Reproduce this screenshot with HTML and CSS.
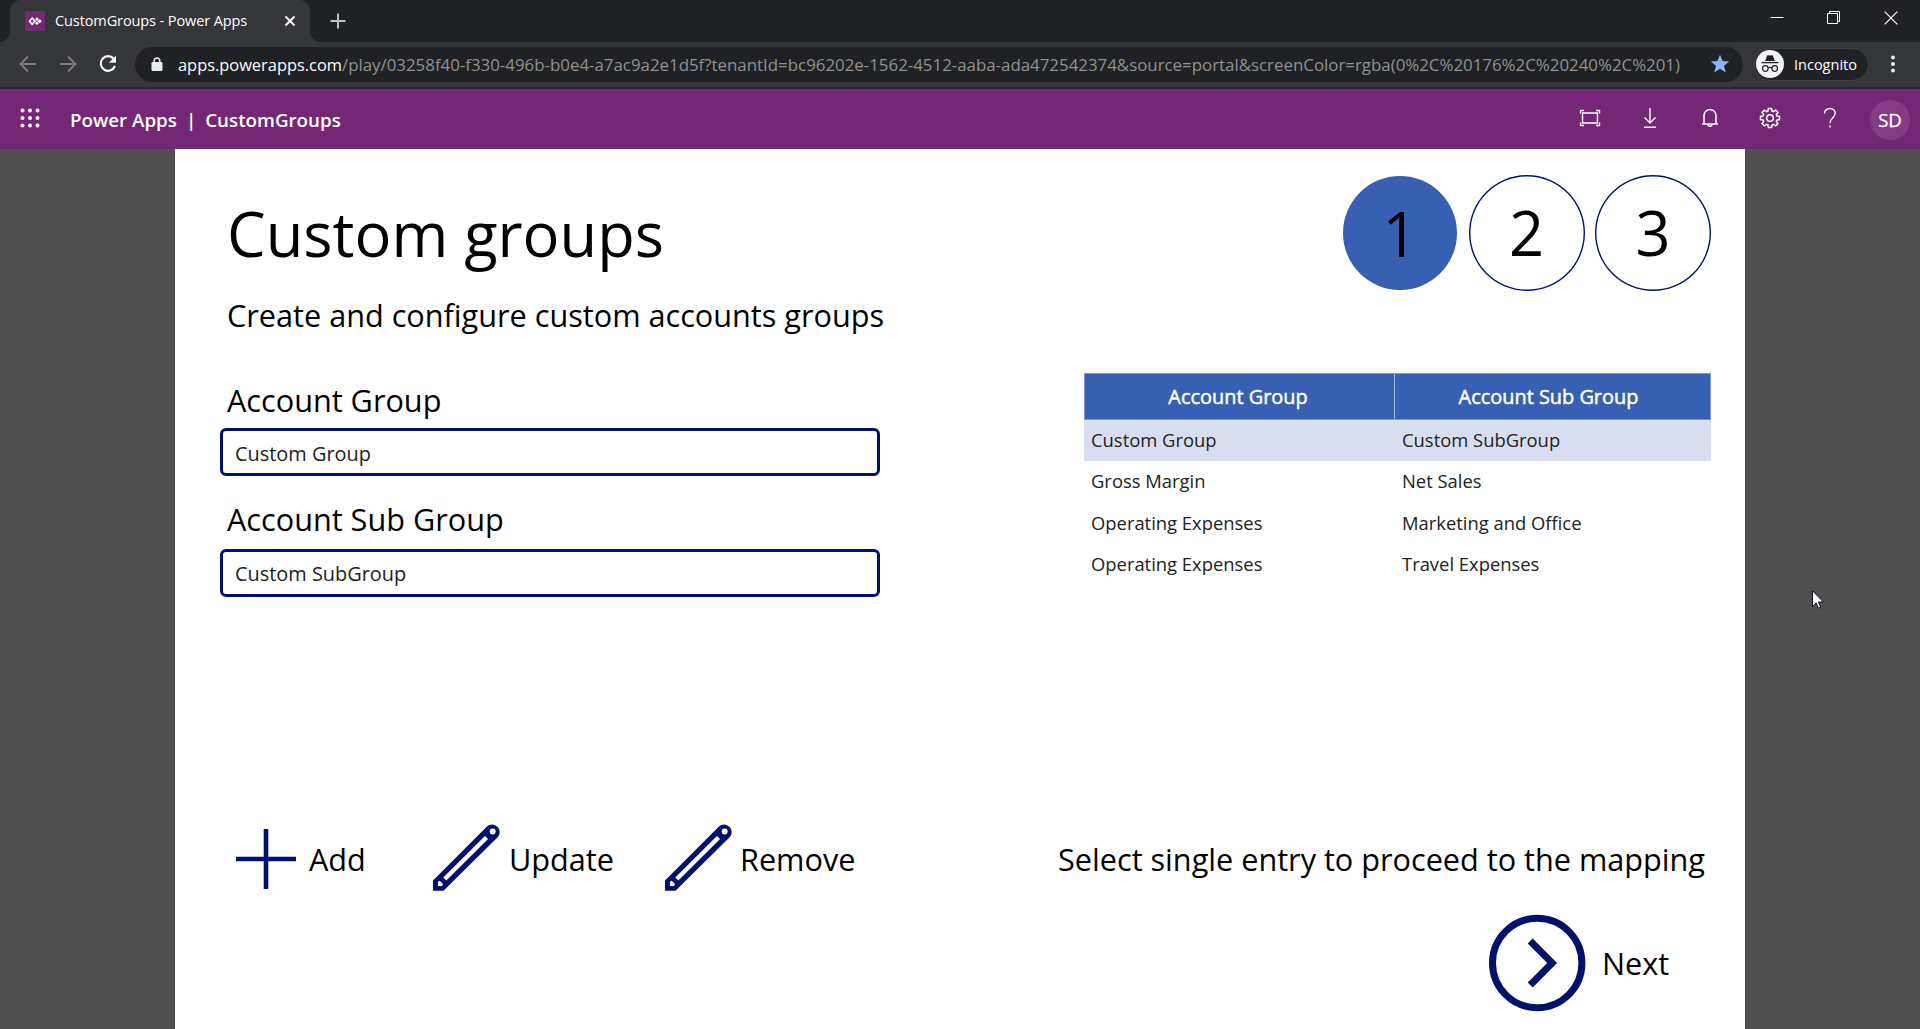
FILE: index.html
```html
<!DOCTYPE html>
<html lang="en">
<head>
<meta charset="utf-8">
<title>CustomGroups - Power Apps</title>
<link rel="stylesheet" href="styles.css">
</head>
<body>
<div class="tabstrip">
  <div class="tab">
    <svg class="favicon" width="20" height="20" viewBox="0 0 20 20"><rect width="20" height="20" fill="#742774"/><path d="M7.200 7.200 10 10.200l-2.800 3-2.800-3z" fill="none" stroke="#fff" stroke-width="1.700"/><path d="M12 6.300 13.900 8.200 12 10.100 10.100 8.200zM12 10.300l1.900 1.900-1.900 1.900-1.900-1.900zM14.800 8.100l2.100 2.100-2.100 2.100-2.100-2.100z" fill="#fff"/></svg>
    <span class="tab-title">CustomGroups - Power Apps</span>
    <svg class="tab-close" width="12" height="12" viewBox="0 0 12 12"><path d="M1.500 1.500l9 9M10.500 1.500l-9 9" stroke="#fff" stroke-width="2"/></svg>
  </div>
  <svg class="new-tab" width="16" height="16" viewBox="0 0 16 16"><path d="M8 .5v15M.5 8h15" stroke="#bdc1c6" stroke-width="2"/></svg>
  <div class="window-controls">
    <svg width="14" height="14" viewBox="0 0 14 14"><path d="M.5 6.500h13" stroke="#fff"/></svg>
    <svg width="14" height="14" viewBox="0 0 14 14"><path d="M.5 2.500h10v10h-10zM2.500 2.500v-2h10v10h-2" fill="none" stroke="#fff"/></svg>
    <svg width="14" height="14" viewBox="0 0 14 14"><path d="M.7.7l12.600 12.600M13.300.7.7 13.300" stroke="#fff" stroke-width="1.200"/></svg>
  </div>
</div>
<div class="toolbar">
  <div class="nav">
    <svg width="20" height="20" viewBox="0 0 20 20"><path d="M18 10H3M10 2.500 2.500 10l7.500 7.500" fill="none" stroke="#7c7d80" stroke-width="1.900"/></svg>
    <svg width="20" height="20" viewBox="0 0 20 20"><path d="M2 10h15M10 2.500l7.500 7.500-7.500 7.500" fill="none" stroke="#7c7d80" stroke-width="1.900"/></svg>
    <svg width="20" height="20" viewBox="0 0 20 20"><path d="M15.700 4.800A7.300 7.300 0 1 0 16.900 12" fill="none" stroke="#f1f3f4" stroke-width="2.200"/><path d="M18 1.600v7.200h-7.200z" fill="#f1f3f4"/></svg>
  </div>
  <div class="omnibox">
    <svg width="12" height="14" viewBox="0 0 12 14"><path d="M3.200 6V3.700a2.800 2.800 0 0 1 5.600 0V6" fill="none" stroke="#e8eaed" stroke-width="1.500"/><rect x=".5" y="5" width="11" height="9" rx="1.300" fill="#e8eaed"/></svg>
    <span class="url"><span class="url-host">apps.powerapps.com</span><span class="url-path">/play/03258f40-f330-496b-b0e4-a7ac9a2e1d5f?tenantId=bc96202e-1562-4512-aaba-ada472542374&amp;source=portal&amp;screenColor=rgba(0%2C%20176%2C%20240%2C%201)</span></span>
    <svg class="star" width="20" height="20" viewBox="0 0 20 20"><path d="M10 .8l2.500 6.300 6.700.4-5.200 4.300 1.700 6.600L10 14.800l-5.700 3.600L6 11.800.8 7.500l6.700-.4z" fill="#8ab4f8"/></svg>
  </div>
  <div class="incognito">
    <svg width="28" height="28" viewBox="0 0 28 28"><circle cx="14" cy="14" r="14" fill="#f1f3f4"/><path d="M9.200 11 11 5.800c.2-.6.700-.8 1.300-.6l1.700.4 1.700-.4c.6-.2 1.100 0 1.300.6l1.800 5.200z" fill="#202124"/><path d="M5.500 12.600h17" stroke="#202124" stroke-width="1.300"/><g fill="none" stroke="#202124" stroke-width="1.200"><circle cx="9.300" cy="18.500" r="2.800"/><circle cx="18.700" cy="18.500" r="2.800"/><path d="M12.100 18c1.200-.8 2.600-.8 3.800 0"/></g></svg>
    <span>Incognito</span>
  </div>
  <svg class="menu" width="6" height="18" viewBox="0 0 6 18" fill="#e8eaed"><circle cx="3" cy="2.500" r="2"/><circle cx="3" cy="9" r="2"/><circle cx="3" cy="15.500" r="2"/></svg>
</div>
<header class="suite">
  <svg class="waffle" width="20" height="20" viewBox="0 0 20 20" fill="#fff"><circle cx="2.500" cy="2.500" r="2"/><circle cx="10" cy="2.500" r="2"/><circle cx="17.500" cy="2.500" r="2"/><circle cx="2.500" cy="10" r="2"/><circle cx="10" cy="10" r="2"/><circle cx="17.500" cy="10" r="2"/><circle cx="2.500" cy="17.500" r="2"/><circle cx="10" cy="17.500" r="2"/><circle cx="17.500" cy="17.500" r="2"/></svg>
  <div class="brand"><span>Power Apps</span><span class="bar">|</span><span>CustomGroups</span></div>
  <div class="suite-icons">
    <svg width="22" height="22" viewBox="0 0 22 22" fill="none" stroke="#fff" stroke-width="1.400"><path d="M3.500 6h15v10h-15z"/><path d="M1.500 6.500v-3H5M17 3.500h3.500v3M20.500 15.500v3H17M5 18.500H1.500v-3"/></svg>
    <svg width="22" height="22" viewBox="0 0 22 22" fill="none" stroke="#fff" stroke-width="1.400"><path d="M11 1v15M5.500 10.500 11 16l5.500-5.500M5 20.300h12"/></svg>
    <svg width="22" height="22" viewBox="0 0 22 22" fill="none" stroke="#fff" stroke-width="1.500"><path d="M3 17h16M5 17V8.500a6 6 0 0 1 12 0V17M9 17.200a2 2 0 0 0 4 0"/></svg>
    <svg width="22" height="22" viewBox="0 0 22 22" fill="none" stroke="#fff" stroke-width="1.500"><circle cx="11" cy="11" r="3.300"/><path d="M9.400 1.500h3.200l.5 2.700 1.200.5 2.300-1.600 2.300 2.300-1.600 2.300.5 1.200 2.700.5v3.200l-2.700.5-.5 1.200 1.600 2.300-2.300 2.300-2.300-1.600-1.200.5-.5 2.700H9.400l-.5-2.700-1.200-.5-2.300 1.600-2.300-2.300 1.600-2.300-.5-1.200-2.700-.5V9.400l2.700-.5.500-1.200-1.600-2.300 2.300-2.300 2.300 1.600 1.200-.5z"/></svg>
    <svg width="22" height="22" viewBox="0 0 22 22" fill="none" stroke="#fff" stroke-width="1.400"><path d="M5.500 6.500c0-3 2.300-5 5.400-5s5.300 2 5.300 4.700c0 4.300-5.200 4.800-5.200 10M11 18.500v2"/></svg>
  </div>
  <div class="avatar">SD</div>
</header>
<main class="app">
  <div class="content">
    <section class="form">
      <h1>Custom groups</h1>
      <p class="subtitle">Create and configure custom accounts groups</p>
      <div class="label">Account Group</div>
      <div class="input first">Custom Group</div>
      <div class="label second">Account Sub Group</div>
      <div class="input">Custom SubGroup</div>
    </section>
    <section class="side">
      <div class="steps"><div class="step current">1</div><div class="step">2</div><div class="step">3</div></div>
      <div class="table">
        <div class="row head"><span>Account Group</span><span>Account Sub Group</span></div>
        <div class="row selected"><span>Custom Group</span><span>Custom SubGroup</span></div>
        <div class="row"><span>Gross Margin</span><span>Net Sales</span></div>
        <div class="row"><span>Operating Expenses</span><span>Marketing and Office</span></div>
        <div class="row"><span>Operating Expenses</span><span>Travel Expenses</span></div>
      </div>
    </section>
  </div>
  <div class="actions">
    <div class="action add"><svg width="60" height="60" viewBox="0 0 60 60"><path d="M30 0v60M0 30h60" stroke="#00126b" stroke-width="4.600"/></svg>Add</div>
    <div class="action update"><svg width="68" height="68" viewBox="0 0 68 68"><path d="M0 66.700V56.500L54.200 2.300a7.600 7.600 0 0 1 10.700 10.700L10.500 66.700z" fill="#00126b"/><path d="M11.800 55 53.500 13.500" stroke="#fff" stroke-width="4.400"/><circle cx="59.700" cy="7.500" r="3" fill="#fff"/><path d="M5 62v-4.200l1.800-1L10 60l-.8 2z" fill="#fff"/></svg>Update</div>
    <div class="action remove"><svg width="68" height="68" viewBox="0 0 68 68"><path d="M0 66.700V56.500L54.200 2.300a7.600 7.600 0 0 1 10.700 10.700L10.500 66.700z" fill="#00126b"/><path d="M11.800 55 53.500 13.500" stroke="#fff" stroke-width="4.400"/><circle cx="59.700" cy="7.500" r="3" fill="#fff"/><path d="M5 62v-4.200l1.800-1L10 60l-.8 2z" fill="#fff"/></svg>Remove</div>
    <div class="hint">Select single entry to proceed to the mapping</div>
  </div>
  <div class="next"><svg width="98" height="98" viewBox="0 0 98 98" fill="none" stroke="#00126b" stroke-width="7"><circle cx="49.200" cy="49" r="44.700"/><path d="M42.200 27 64.200 49 42.200 71"/></svg>Next</div>
</main>
<svg class="cursor" width="12" height="19" viewBox="0 0 12 19"><path d="M.5.7v15.600l3.600-3.400 2.300 5.300 2.300-1-2.300-5.200h5z" fill="#fff" stroke="#101020"/></svg>
</body>
</html>
```
FILE: styles.css
```css
* { box-sizing: border-box; }
body {
  margin: 0;
  width: 1920px;
  height: 1029px;
  overflow: hidden;
  background: #505050;
  font-family: "Open Sans", "Noto Sans", sans-serif;
  color: #000;
}
svg { display: block; flex: none; }

/* Browser chrome */
.tabstrip { display: flex; align-items: flex-start; height: 42px; background: #202124; padding-left: 10px; }
.tab {
  display: flex; align-items: center; width: 300px; height: 42px; padding: 0 14px 0 15px;
  background: #35363a; border-radius: 10px 10px 0 0; color: #fff; position: relative;
}
.tab::before, .tab::after { content: ""; position: absolute; bottom: 0; width: 10px; height: 10px; }
.tab::before { left: -10px; background: radial-gradient(circle at 0 0, #202124 9.500px, #35363a 10px); }
.tab::after { right: -10px; background: radial-gradient(circle at 100% 0, #202124 9.500px, #35363a 10px); }
.tab-title { margin-left: 10px; padding-bottom: 1px; font-size: 14.500px; letter-spacing: -.1px; white-space: nowrap; }
.tab-close { margin-left: auto; }
.new-tab { margin: 13px 0 0 20px; }
.window-controls { display: flex; gap: 43px; margin: 11px 22px 0 auto; }
.toolbar { display: flex; align-items: center; height: 47px; padding-bottom: 1px; background: #35363a; border-bottom: 2px solid #28292c; }
.nav { display: flex; gap: 20px; margin-left: 18px; }
.omnibox { display: flex; align-items: center; width: 1608px; height: 35px; margin-left: 17px; padding: 0 13px 0 16px; border-radius: 18px; background: #202124; }
.url { margin-left: 15px; font-size: 16.880px; white-space: nowrap; color: #909193; }
.url-host { color: #fff; font-size: 16.400px; }
.star { margin-left: auto; }
.incognito { display: flex; align-items: center; width: 115px; height: 33px; margin-left: 11px; padding-left: 1px; gap: 10px; border: 1px solid #404144; border-radius: 17px; background: #202124; color: #fff; font-size: 14.500px; }
.menu { margin-left: 21px; }

/* Suite header */
.suite { display: flex; align-items: center; height: 60px; background: #742774; color: #fff; }
.waffle { margin: -2px 0 0 19.500px; }
.brand { display: flex; margin-left: 30.500px; font-size: 18.750px; font-weight: 600; }
.bar { margin: 0 9px 0 9px; }
.suite-icons { display: flex; gap: 38px; margin: -2px 0 0 auto; }
.avatar { width: 40px; height: 40px; margin: 2px 10px 0 29px; border-radius: 50%; background: #843d84; font-size: 18.500px; line-height: 40px; text-align: center; -webkit-text-stroke: .3px #fff; }

/* App canvas */
.app { height: 880px; margin: 0 175px; padding: 0 34px 0 45px; background: #fff; }
.content { display: flex; justify-content: space-between; height: 668px; }
.form { width: 660px; }
h1 { margin: 42px 0 0 7px; font-size: 61.400px; font-weight: 400; line-height: 84px; }
.subtitle { margin: 19px 0 43px 7px; }
.subtitle, .label, .action, .hint, .next { font-size: 30.650px; line-height: 42px; white-space: nowrap; }
.label { margin: 0 0 7px 7px; }
.label.second { margin-top: 22px; }
.input { height: 48px; padding-left: 12px; border: 3px solid #00126b; border-radius: 6px; font-size: 19.920px; line-height: 43px; color: #222; }
.input.first { line-height: 45px; }
.label.second + .input { margin-top: 9px; }
.side { width: 627px; padding-top: 26px; }
.steps { display: flex; justify-content: flex-end; gap: 10.500px; }
.step { width: 116px; height: 116px; box-shadow: inset 0 0 0 1.400px #00126b; border-radius: 50%; font-size: 61.300px; line-height: 115px; text-align: center; }
.step.current { box-shadow: none; border: .5px solid transparent; background: #3860b2 content-box; line-height: 114px; }
.table { margin-top: 82px; font-size: 18.400px; color: #222; }
.row { display: grid; grid-template-columns: 311px 1fr; height: 41.400px; line-height: 40px; }
.row span { padding-left: 7px; }
.head { grid-template-columns: 309px 1fr; height: 47px; line-height: 45px; background: #3860b2; border: 1px solid #7f9ad0; color: #fff; font-size: 19.920px; text-align: center; -webkit-text-stroke: .5px #fff; }
.head span { padding: 0 3px 0 0; }
.head span + span { padding-right: 8px; border-left: 1px solid #a8b8de; }
.selected { background: #d8def0; }
.actions { display: flex; align-items: center; height: 84px; }
.action { display: flex; align-items: center; }
.update svg, .remove svg { margin-top: -2px; }
.add { width: 213px; padding-left: 16px; gap: 13px; }
.update { width: 232px; gap: 8px; }
.remove { gap: 7px; }
.hint { margin-left: auto; padding-right: 6px; }
.next { display: flex; align-items: center; gap: 16px; margin: 13px 0 0 1268px; }
.cursor { position: absolute; left: 1812px; top: 590px; }
```
